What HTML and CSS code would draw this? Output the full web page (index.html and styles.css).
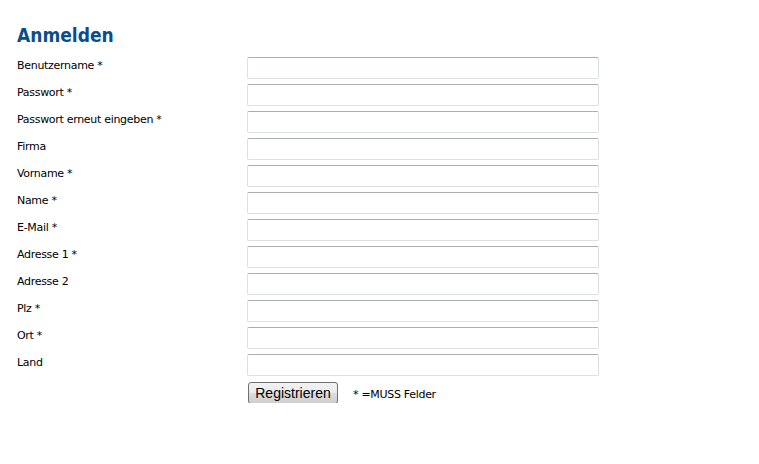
FILE: index.html
```html
<!DOCTYPE html>
<html lang="de">
<head>
<meta charset="utf-8">
<title>Anmelden</title>
<link rel="stylesheet" href="styles.css">
</head>
<body>
<div class="page">
  <h1 class="title">Anmelden</h1>
  <form class="form">
    <label class="lbl">Benutzername *</label><input class="field" type="text">
    <label class="lbl">Passwort *</label><input class="field" type="password">
    <label class="lbl">Passwort erneut eingeben *</label><input class="field" type="password">
    <label class="lbl">Firma</label><input class="field" type="text">
    <label class="lbl">Vorname *</label><input class="field" type="text">
    <label class="lbl">Name *</label><input class="field" type="text">
    <label class="lbl">E-Mail *</label><input class="field" type="text">
    <label class="lbl">Adresse 1 *</label><input class="field" type="text">
    <label class="lbl">Adresse 2</label><input class="field" type="text">
    <label class="lbl">Plz *</label><input class="field" type="text">
    <label class="lbl">Ort *</label><input class="field" type="text">
    <label class="lbl">Land</label><input class="field" type="text">
    <span></span>
    <div class="actions">
      <button class="btn" type="button">Registrieren</button>
      <span class="note">* =MUSS Felder</span>
    </div>
  </form>
</div>
</body>
</html>
```
FILE: styles.css
```css
html, body {
  margin: 0;
  padding: 0;
  background: #ffffff;
}
body {
  font-family: "DejaVu Sans", Verdana, sans-serif;
  font-size: 11px;
  letter-spacing: -0.3px;
  color: #000000;
}
.page {
  padding: 22px 0 0 17px;
}
.title {
  margin: 0 0 9px 0;
  font-family: "DejaVu Sans Condensed", "DejaVu Sans", sans-serif;
  font-stretch: condensed;
  font-size: 19px;
  line-height: 26px;
  font-weight: bold;
  color: #0b4d8c;
  letter-spacing: 0;
}
.form {
  display: grid;
  grid-template-columns: 230px 352px;
  grid-auto-rows: 22px;
  row-gap: 5px;
}
.lbl {
  display: flex;
  align-items: center;
  height: 16px;
  line-height: 16px;
  padding-top: 1px;
}
.field {
  box-sizing: border-box;
  width: 352px;
  height: 22px;
  margin: 0;
  border: 1px solid #dcdfe3;
  border-top-color: #abadb3;
  border-radius: 2px;
  background: #ffffff;
  padding: 0 3px;
}
.actions {
  display: flex;
  align-items: center;
  height: 22px;
  padding-left: 1px;
  padding-top: 1px;
}
.btn {
  box-sizing: border-box;
  width: 90px;
  height: 22px;
  margin: 0;
  padding: 0;
  font-family: "Liberation Sans", Arial, sans-serif;
  font-size: 14px;
  letter-spacing: 0;
  color: #000;
  border: 1px solid #707070;
  border-radius: 3px;
  background: linear-gradient(#f2f2f2 0%, #ebebeb 50%, #dddddd 51%, #cfcfcf 100%);
}
.note {
  margin-left: 15px;
  padding-top: 2px;
}
```
